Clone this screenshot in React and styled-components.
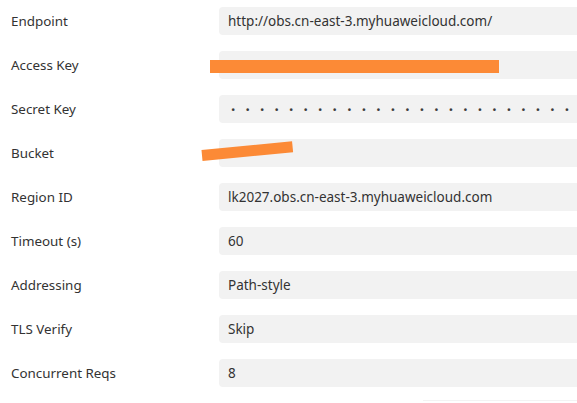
import styled, { createGlobalStyle } from "styled-components";

const Global = createGlobalStyle`
  html, body {
    margin: 0;
    padding: 0;
    background: #ffffff;
    overflow: hidden;
  }
  body {
    font-family: "Noto Sans", "Open Sans", sans-serif;
  }
`;

const Page = styled.div`
  width: 577px;
  height: 403px;
  overflow: hidden;
  position: relative;
`;

const Form = styled.div`
  display: flex;
  flex-direction: column;
  gap: 16px;
  padding-top: 7px;
`;

const Row = styled.div`
  display: grid;
  grid-template-columns: 219px 420px;
  align-items: center;
  height: 28px;
`;

const Label = styled.div`
  padding-left: 11px;
  font-size: 13.4px;
  color: #333333;
  white-space: nowrap;
`;

const Field = styled.div`
  position: relative;
  height: 28px;
  background: #f2f2f2;
  border-radius: 4px;
  display: flex;
  align-items: center;
  padding-left: 9px;
  font-size: 13.5px;
  color: #333333;
  white-space: nowrap;
  overflow: hidden;
`;

const Dots = styled.div`
  display: flex;
  align-items: center;
  gap: 10.2px;
  padding-left: 3px;
  font-size: 11.5px;
  color: #3a3a3a;
`;

const Redact = styled.div`
  position: absolute;
  background: #fc8a36;
  left: ${(p) => p.$x}px;
  top: ${(p) => p.$y}px;
  width: ${(p) => p.$w}px;
  height: ${(p) => p.$h}px;
  transform: rotate(${(p) => p.$r || 0}deg);
  transform-origin: left center;
`;

const FooterEdge = styled.div`
  position: absolute;
  left: 423px;
  top: 400px;
  width: 160px;
  height: 6px;
  border-top: 1px solid #f3f3f3;
`;

const rows = [
  { label: "Endpoint", value: "http://obs.cn-east-3.myhuaweicloud.com/" },
  { label: "Access Key", value: "" },
  { label: "Secret Key", secret: true },
  { label: "Bucket", value: "" },
  { label: "Region ID", value: "lk2027.obs.cn-east-3.myhuaweicloud.com" },
  { label: "Timeout (s)", value: "60" },
  { label: "Addressing", value: "Path-style" },
  { label: "TLS Verify", value: "Skip" },
  { label: "Concurrent Reqs", value: "8" },
];

export default function App() {
  return (
    <Page>
      <Global />
      <Form>
        {rows.map((r) => (
          <Row key={r.label}>
            <Label>{r.label}</Label>
            <Field>
              {r.secret ? (
                <Dots>
                  {Array.from({ length: 24 }, (_, i) => (
                    <span key={i}>•</span>
                  ))}
                </Dots>
              ) : (
                r.value
              )}
            </Field>
          </Row>
        ))}
      </Form>
      <Redact $x={210} $y={60} $w={289} $h={13} />
      <Redact $x={202} $y={150} $w={91} $h={11} $r={-5.5} />
      <FooterEdge />
    </Page>
  );
}
